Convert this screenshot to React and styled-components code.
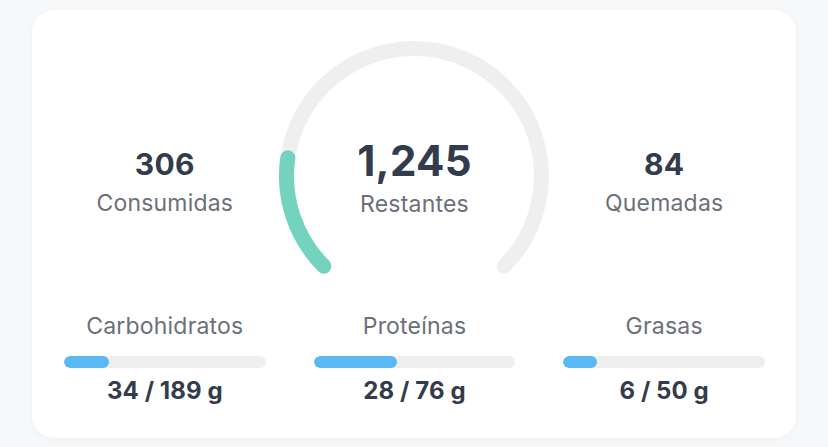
import React from "react";
import styled, {createGlobalStyle} from "styled-components";

const GlobalStyle = createGlobalStyle`
    html, body {
        margin: 0;
        padding: 0;
        background: #f7f8fa;
        font-family: "Inter", "Liberation Sans", sans-serif;
    }
`;

const Page = styled.div`
    width: 828px;
    height: 447px;
    box-sizing: border-box;
    padding: 10px 32px 9px 32px;
`;

const Card = styled.div`
    box-sizing: border-box;
    height: 428px;
    background: #ffffff;
    border-radius: 22px;
    box-shadow: 0 1px 6px rgba(30, 40, 60, 0.04);
    padding: 31px 31px 0 32px;
`;

const Row = styled.div`
    display: grid;
    grid-template-columns: repeat(3, minmax(0, 1fr));
    column-gap: 48px;
    align-items: start;
`;

const Stat = styled.div`
    display: flex;
    flex-direction: column;
    align-items: center;
    padding-top: ${p => p.$top || 0}px;
`;

const Number = styled.div`
    font-size: ${p => p.$big ? 42 : 30}px;
    font-weight: 700;
    line-height: 1.2;
    color: #333c4c;
    letter-spacing: 0.3px;
`;

const Label = styled.div`
    font-size: 23px;
    line-height: 1.2;
    color: #6c707a;
    letter-spacing: 0.2px;
    margin-top: ${p => p.$gap || 0}px;
`;

const Gauge = styled.div`
    display: grid;
    margin: 0 -35px;
    justify-items: center;

    > * {
        grid-area: 1 / 1;
    }
`;

const Macros = styled(Row)`
    margin-top: 38px;
`;

const Macro = styled.div`
    display: flex;
    flex-direction: column;
    align-items: center;
`;

const Track = styled.div`
    width: 100%;
    height: 12px;
    border-radius: 6px;
    background: #efefef;
    margin-top: 15px;
    overflow: hidden;
`;

const Fill = styled.div`
    height: 100%;
    border-radius: 6px;
    background: #5ab8f3;
`;

const Amount = styled.div`
    font-size: 24px;
    font-weight: 700;
    color: #333c4c;
    line-height: 1.2;
    letter-spacing: 0.1px;
    margin-top: 9px;
`;

const macros = [
    {name: "Carbohidratos", value: 34, goal: 189},
    {name: "Proteínas", value: 28, goal: 76},
    {name: "Grasas", value: 6, goal: 50},
];

export default function App() {
    const consumed = 306;
    const remaining = 1245;
    const pct = consumed / (consumed + remaining) * 100;

    return (
        <Page>
            <GlobalStyle/>
            <Card>
                <Row>
                    <Stat $top={105}>
                        <Number>306</Number>
                        <Label $gap={8}>Consumidas</Label>
                    </Stat>

                    <Gauge>
                        <svg width="270" height="234" viewBox="0 0 270 234">
                            <path d="M 44.84 225.16 A 127.5 127.5 0 1 1 225.16 225.16"
                                  fill="none" stroke="#efefef" strokeWidth="15" strokeLinecap="round"/>
                            <path d="M 44.84 225.16 A 127.5 127.5 0 1 1 225.16 225.16"
                                  fill="none" stroke="#74d3bf" strokeWidth="15" strokeLinecap="round"
                                  pathLength="100" strokeDasharray={`${pct} 200`}/>
                        </svg>
                        <Stat $top={95}>
                            <Number $big>1,245</Number>
                            <Label $gap={5}>Restantes</Label>
                        </Stat>
                    </Gauge>

                    <Stat $top={105}>
                        <Number>84</Number>
                        <Label $gap={8}>Quemadas</Label>
                    </Stat>
                </Row>

                <Macros>
                    {macros.map(m => (
                        <Macro key={m.name}>
                            <Label>{m.name}</Label>
                            <Track>
                                <Fill style={{width: `calc(${m.value / m.goal * 100}% + 9px)`}}/>
                            </Track>
                            <Amount>{m.value} / {m.goal} g</Amount>
                        </Macro>
                    ))}
                </Macros>
            </Card>
        </Page>
    );
};
